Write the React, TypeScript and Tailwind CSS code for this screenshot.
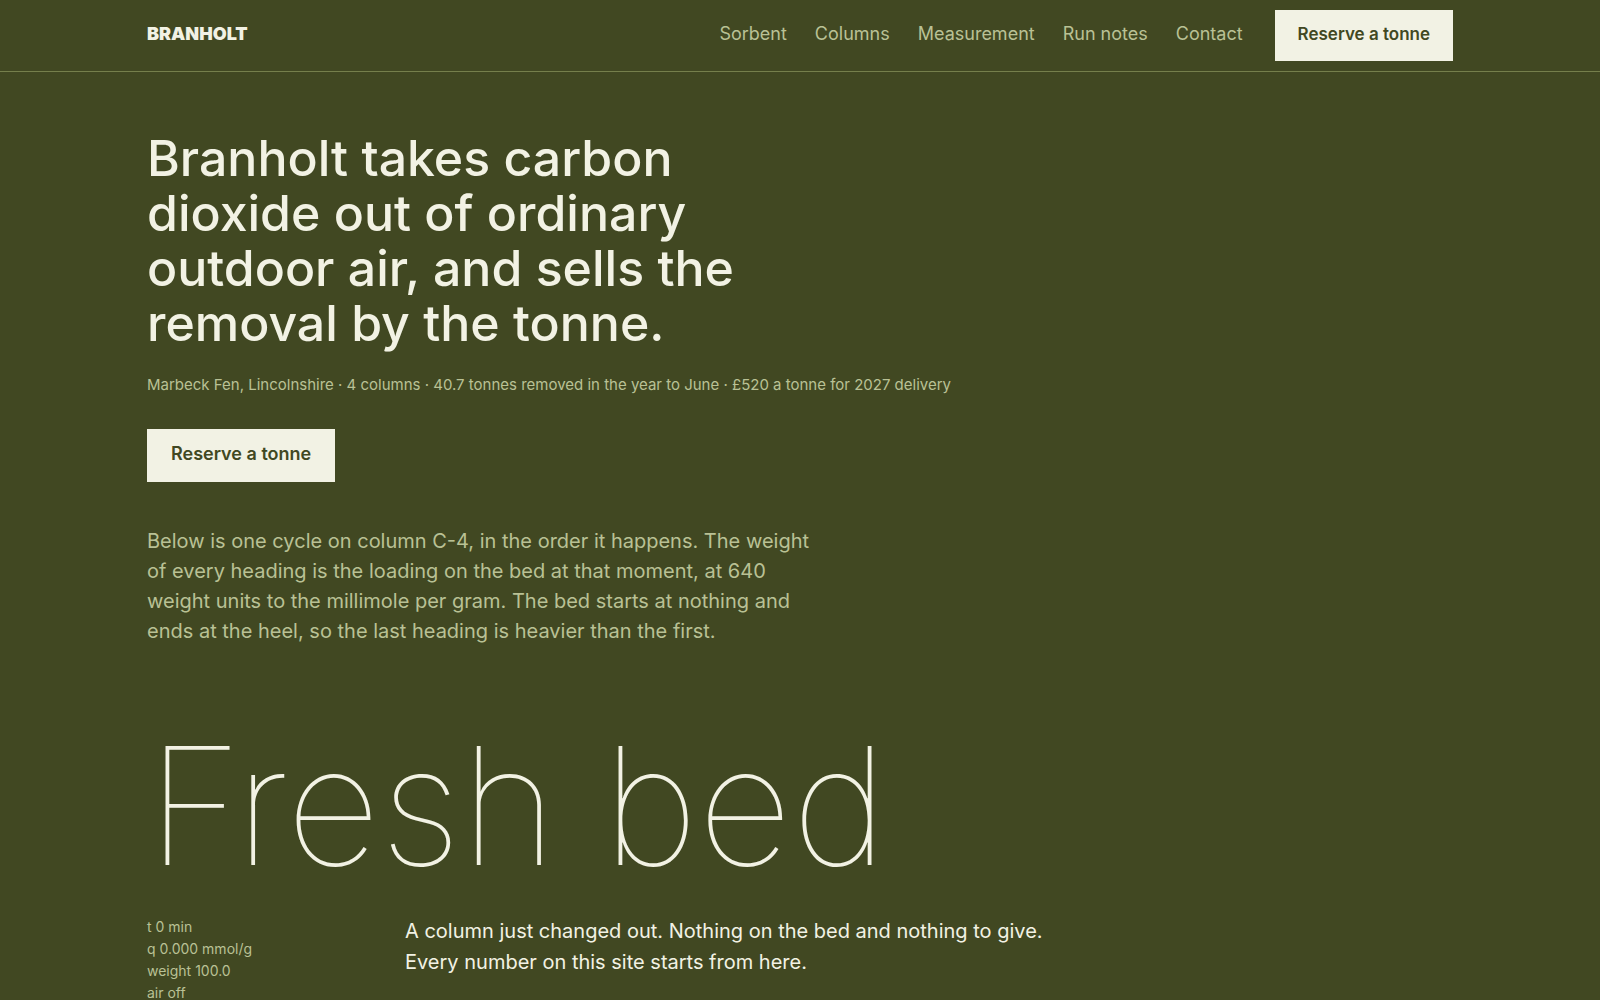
const navLinks = [
    {label: "Sorbent", href: "#sorbent"},
    {label: "Columns", href: "#columns"},
    {label: "Measurement", href: "#measurement"},
    {label: "Run notes", href: "#run-notes"},
    {label: "Contact", href: "#contact"},
];

const freshBedReadings = ["t 0 min", "q 0.000 mmol/g", "weight 100.0", "air off"];

const Header = () => {
    return (
        <header className="border-b border-[#757f4c]">
            <div className="flex h-[71px] max-w-[1306px] mx-auto items-center justify-between">
                <a href="#top" className="pb-1 text-[18px] leading-6 font-black">
                    BRANHOLT
                </a>
                <nav className="flex items-center gap-8">
                    <div className="flex items-center gap-7 pb-1 text-[18px] leading-6 text-[#b9c195]">
                        {navLinks.map((link) => (
                            <a key={link.href} href={link.href} className="hover:text-[#f2f2e4]">
                                {link.label}
                            </a>
                        ))}
                    </div>
                    <button
                        type="button"
                        className="h-[51px] px-[23px] pb-1 bg-[#f2f2e4] text-[#414822] text-[17px] leading-6 font-semibold"
                    >
                        Reserve a tonne
                    </button>
                </nav>
            </div>
        </header>
    );
};

const Intro = () => {
    return (
        <section className="pt-[59px]">
            <h1 className="max-w-[620px] text-[50px] leading-[55px] font-medium">
                Branholt takes carbon dioxide out of ordinary outdoor air, and sells the removal by the tonne.
            </h1>
            <p className="mt-[22px] text-[15px] leading-6 text-[#b9c195]">
                Marbeck Fen, Lincolnshire · 4 columns · 40.7 tonnes removed in the year to June · £520 a tonne
                for 2027 delivery
            </p>
            <button
                type="button"
                className="mt-8 h-[53px] px-6 pb-1 bg-[#f2f2e4] text-[#414822] text-[18px] leading-6 font-semibold"
            >
                Reserve a tonne
            </button>
            <p className="mt-11 max-w-[670px] text-[20px] leading-[30px] text-[#b9c195]">
                Below is one cycle on column C-4, in the order it happens. The weight of every heading is the
                loading on the bed at that moment, at 640 weight units to the millimole per gram. The bed starts
                at nothing and ends at the heel, so the last heading is heavier than the first.
            </p>
        </section>
    );
};

const FreshBed = () => {
    return (
        <section className="pt-[76px]">
            <h2 className="text-[164px] leading-[168px] font-thin whitespace-nowrap">Fresh bed</h2>
            <div className="flex pt-[26px]">
                <ul className="w-[258px] shrink-0 text-[14px] leading-[22px] text-[#b9c195]">
                    {freshBedReadings.map((reading) => (
                        <li key={reading}>{reading}</li>
                    ))}
                </ul>
                <p className="max-w-[670px] text-[20px] leading-[31px]">
                    A column just changed out. Nothing on the bed and nothing to give. Every number on this site
                    starts from here.
                </p>
            </div>
        </section>
    );
};

const App = () => {
    return (
        <div className="min-h-screen bg-[#414822] text-[#f2f2e4] font-['Inter','Liberation_Sans',sans-serif]">
            <Header/>
            <main className="max-w-[1306px] mx-auto">
                <Intro/>
                <FreshBed/>
            </main>
        </div>
    );
};

export default App;
